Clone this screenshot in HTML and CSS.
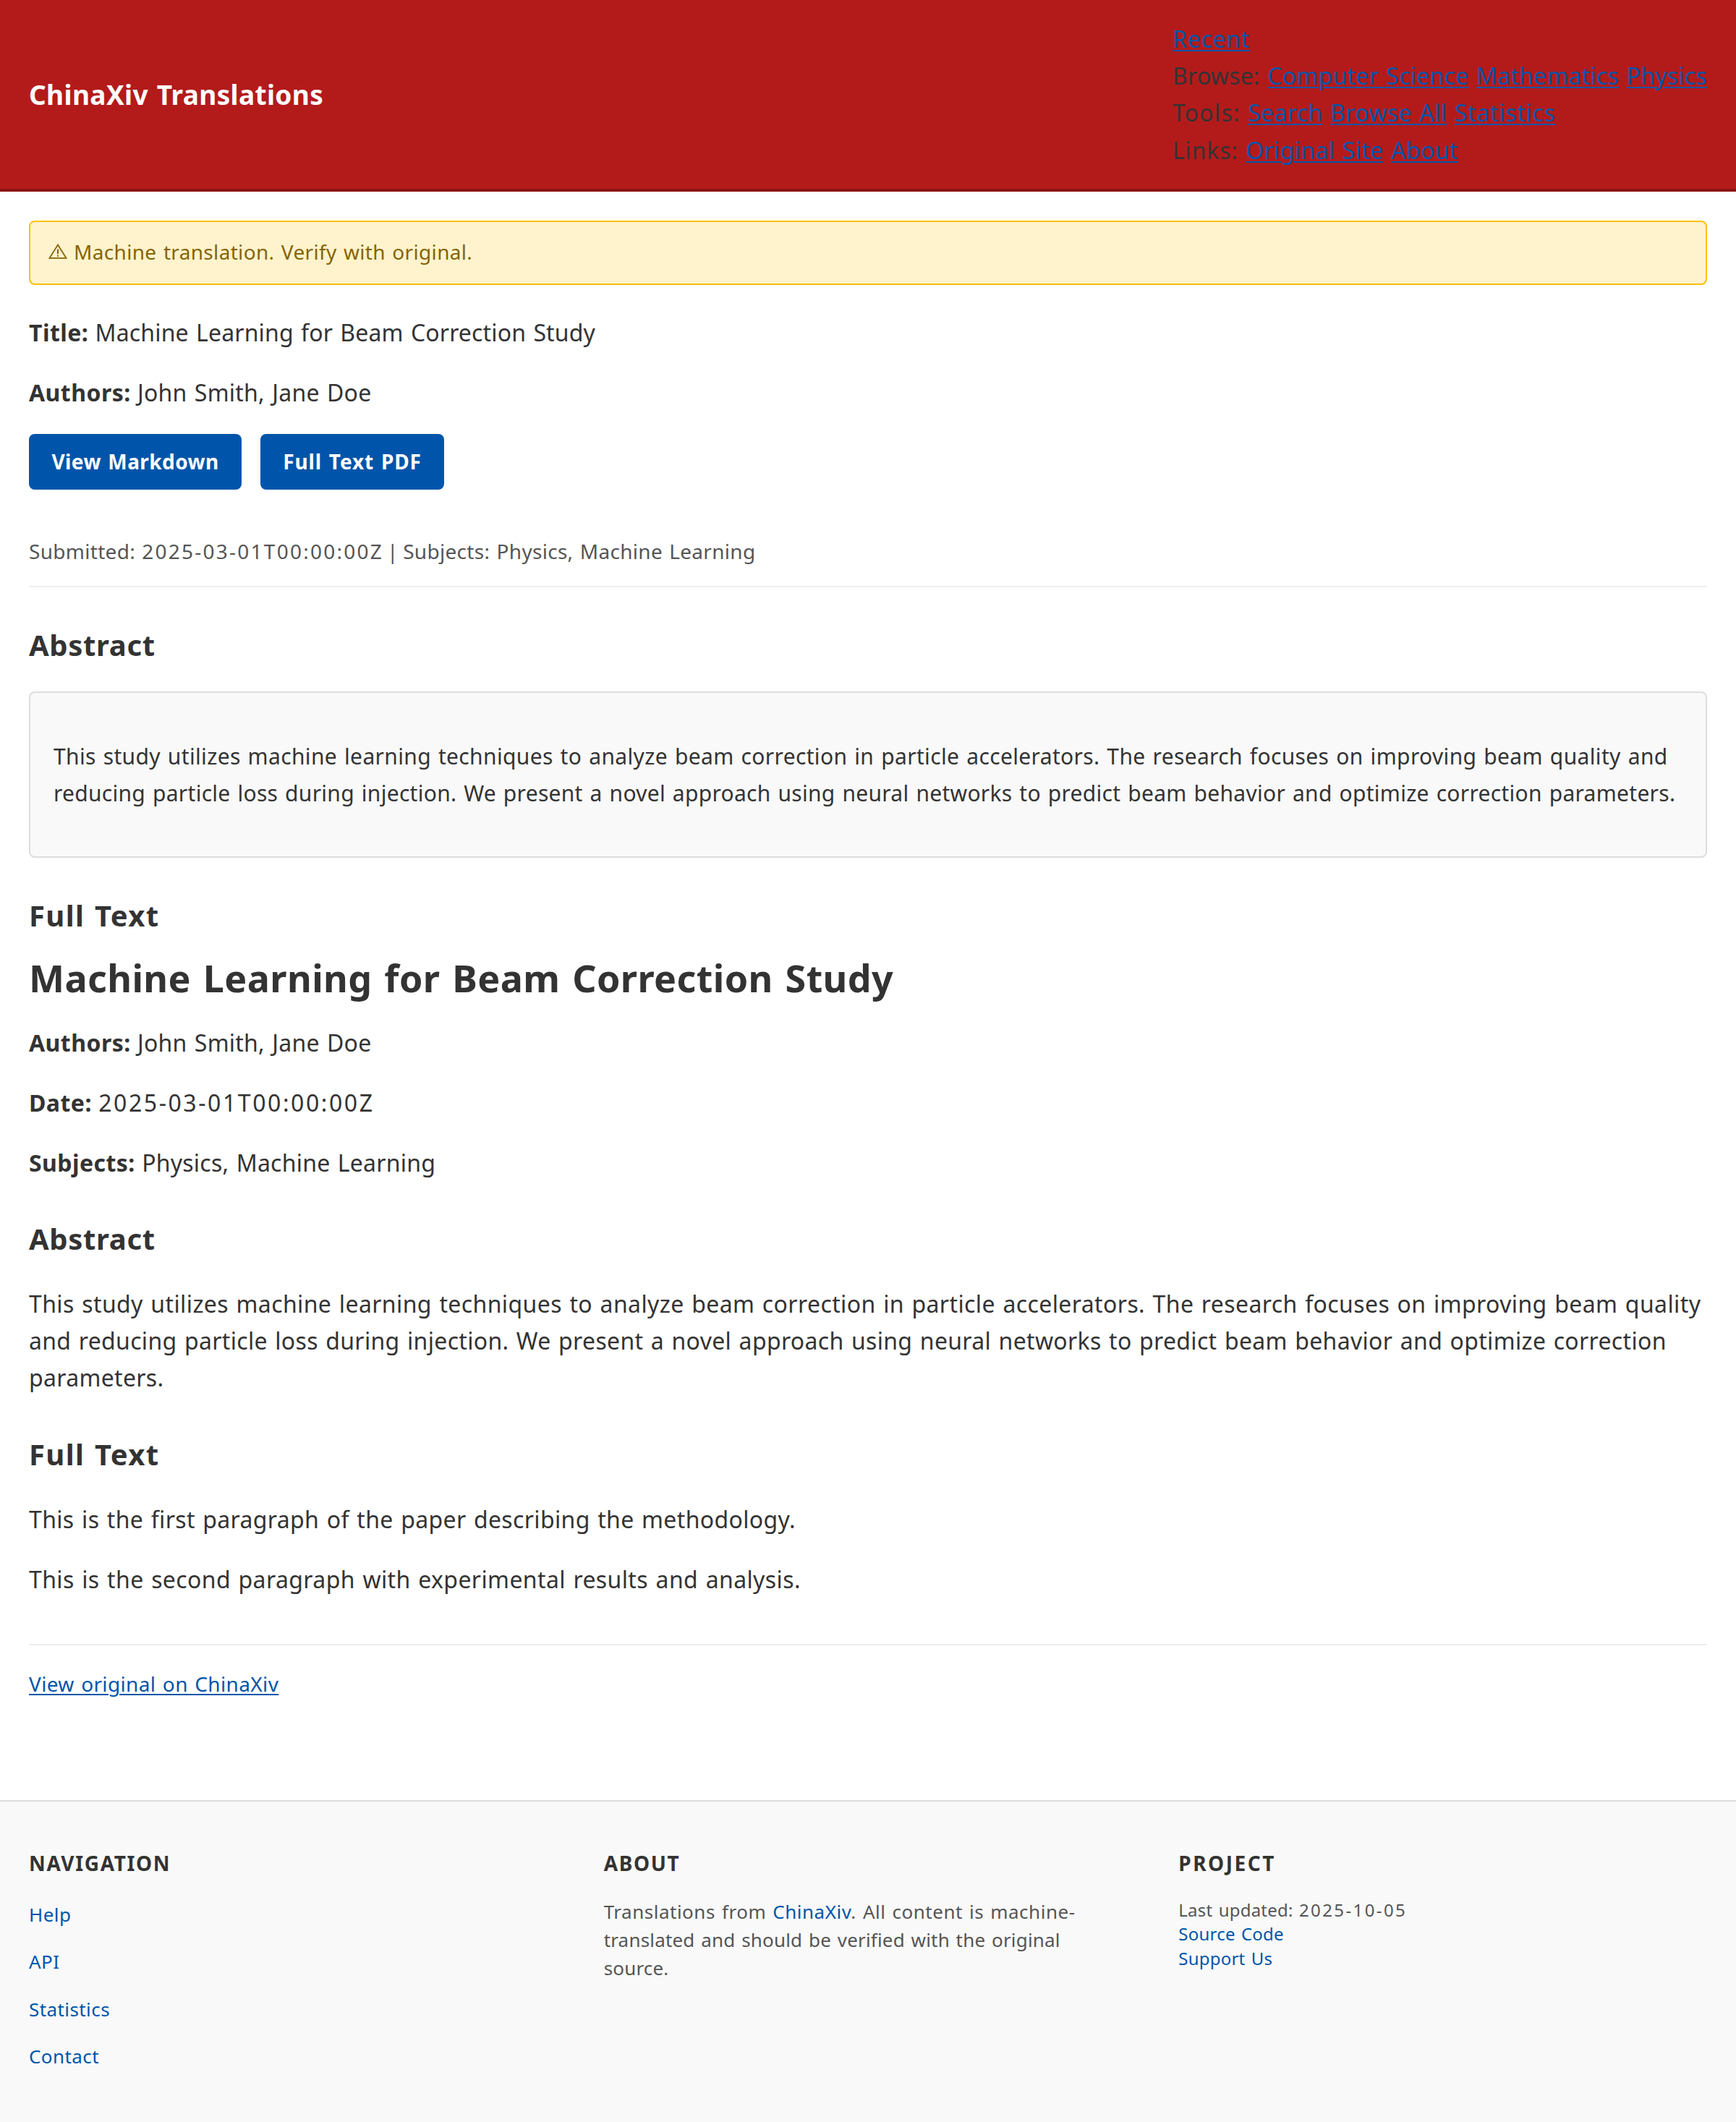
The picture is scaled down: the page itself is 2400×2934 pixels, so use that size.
FILE: index.html
```html
<!DOCTYPE html>
<html lang="en">
<head>
<meta charset="utf-8">
<title>Machine Learning for Beam Correction Study - ChinaXiv Translations</title>
<link rel="stylesheet" href="styles.css">
</head>
<body>
<header class="site-header">
  <div class="logo">ChinaXiv Translations</div>
  <nav class="site-nav">
    <div><a class="loose" href="#">Recent</a></div>
    <div class="browse">Browse: <a href="#">Computer Science</a> <a href="#">Mathematics</a> <a href="#">Physics</a></div>
    <div><span class="tools-label">Tools:</span> <a href="#">Search</a> <a href="#">Browse All</a> <a class="loose" href="#">Statistics</a></div>
    <div><span class="links-label">Links:</span> <a href="#">Original Site</a> <a href="#">About</a></div>
  </nav>
</header>
<main class="content">
  <div class="alert"><svg class="warn" viewBox="0 0 26 21" aria-hidden="true"><path d="M13 1.6 L24.6 19.9 H1.4 Z" fill="none" stroke="currentColor" stroke-width="1.8"/><path d="M13 7.5V14.2M13 15.8V17.8" stroke="currentColor" stroke-width="2"/></svg>Machine translation. Verify with original.</div>
  <p class="fact lead"><strong>Title:</strong> Machine Learning for Beam Correction Study</p>
  <p class="fact"><strong>Authors:</strong> John Smith, Jane Doe</p>
  <div class="actions">
    <a class="button" href="#">View Markdown</a>
    <a class="button button-pdf" href="#">Full Text PDF</a>
  </div>
  <div class="meta">Submitted: <span class="date">2025-03-01T00:00:00Z</span> <span class="sep">|</span> Subjects: Physics, Machine Learning</div>
  <h2>Abstract</h2>
  <div class="abstract"><p>This study utilizes machine learning techniques to analyze beam correction in particle accelerators. The research focuses on improving beam quality and reducing particle loss during injection. We present a novel approach using neural networks to predict beam behavior and optimize correction parameters.</p></div>
  <h2 class="wide before-title">Full Text</h2>
  <h1>Machine Learning for Beam Correction Study</h1>
  <p class="fact"><strong>Authors:</strong> John Smith, Jane Doe</p>
  <p class="fact"><strong>Date:</strong> <span class="date">2025-03-01T00:00:00Z</span></p>
  <p class="fact"><strong>Subjects:</strong> Physics, Machine Learning</p>
  <h2>Abstract</h2>
  <p class="body-text">This study utilizes machine learning techniques to analyze beam correction in particle accelerators. The research focuses on improving beam quality and reducing particle loss during injection. We present a novel approach using neural networks to predict beam behavior and optimize correction parameters.</p>
  <h2 class="wide">Full Text</h2>
  <p class="body-text short">This is the first paragraph of the paper describing the methodology.</p>
  <p class="body-text">This is the second paragraph with experimental results and analysis.</p>
  <div class="source"><a href="#">View original on ChinaXiv</a></div>
</main>
<footer class="site-footer">
  <section>
    <h3>Navigation</h3>
    <ul>
      <li><a href="#">Help</a></li>
      <li><a href="#">API</a></li>
      <li><a href="#">Statistics</a></li>
      <li><a href="#">Contact</a></li>
    </ul>
  </section>
  <section>
    <h3>About</h3>
    <p class="about">Translations from <a href="#">ChinaXiv</a>. All content is machine-<br>translated and should be verified with the original<br>source.</p>
  </section>
  <section>
    <h3 class="project-title">Project</h3>
    <div class="project">
      <div>Last updated: <span class="date">2025-10-05</span></div>
      <div><a href="#">Source Code</a></div>
      <div><a href="#">Support Us</a></div>
    </div>
  </section>
</footer>
</body>
</html>
```
FILE: styles.css
```css
* { box-sizing: border-box; }
body {
  margin: 0;
  background: #fff;
  color: #333;
  font-family: "Noto Sans", "Open Sans", sans-serif;
  font-size: 32px;
  line-height: 1.6;
  letter-spacing: .36px;
  word-spacing: 1.8px;
}
a { color: #0055aa; text-decoration-thickness: 2px; text-underline-offset: 3px; }
p { margin: 32px 0; }
strong { letter-spacing: .45px; margin-right: -1px; }
.date { letter-spacing: .08em; margin-right: -.08em; }

.site-header {
  display: flex;
  justify-content: space-between;
  align-items: center;
  padding: 28px 40px;
  background: #b31b1b;
  border-bottom: 4px solid #8b1414;
}
.logo { color: #fff; font-size: 37px; font-weight: 700; letter-spacing: .36px; }
.site-nav .loose { letter-spacing: .7px; }
.browse { letter-spacing: .24px; }
.tools-label { letter-spacing: 1.2px; }
.links-label { letter-spacing: .8px; }

.content { padding: 40px 40px 138px; }
.alert {
  display: flex;
  align-items: center;
  height: 89px;
  padding: 0 25px 1px;
  border: 2px solid #ffc107;
  border-radius: 8px;
  background: #fff3cd;
  color: #856404;
  font-size: 28px;
  letter-spacing: .33px;
}
.warn { width: 26px; height: 21px; margin: 0 9px 3px 0; }
.fact { letter-spacing: .23px; }
.lead { margin-top: 40px; letter-spacing: .15px; }

.actions { display: flex; gap: 26px; }
.button {
  padding: 16px 0;
  width: 294px;
  border-radius: 8px;
  background: #0055aa;
  color: #fff;
  font-size: 28px;
  font-weight: 700;
  letter-spacing: .42px;
  text-align: center;
  text-decoration: none;
}
.button-pdf { width: 254px; letter-spacing: .85px; }

.meta {
  margin-top: 63px;
  padding-bottom: 25px;
  border-bottom: 2px solid #eee;
  color: #555;
  font-size: 28px;
  letter-spacing: .29px;
}
.sep { margin: 0 -3px 0 -2px; }
h1 { margin: 0; font-size: 52px; line-height: 1.2; letter-spacing: .4px; word-spacing: 2.9px; }
h2 { margin: 56px 0 40px; font-size: 40px; line-height: 48px; letter-spacing: .66px; }
h2.wide { letter-spacing: 1.4px; }
h2.before-title { margin-bottom: 31.4px; }
.abstract {
  padding: 32px;
  border: 2px solid #ddd;
  border-radius: 8px;
  background: #f9f9f9;
  font-size: 30px;
  line-height: 1.7;
  letter-spacing: .285px;
}
.abstract p { margin: 30px 0; }
.abstract p::first-line { letter-spacing: .35px; }
.body-text { letter-spacing: .32px; }
.body-text::first-line { letter-spacing: .39px; }
.body-text.short::first-line { letter-spacing: .35px; }
.source { margin-top: 64px; padding-top: 31px; border-top: 2px solid #eee; font-size: 28px; }

.site-footer {
  display: grid;
  grid-template-columns: repeat(3, 1fr);
  gap: 64px;
  padding: 63px 40px 70px;
  border-top: 2px solid #ddd;
  background: #f9f9f9;
  color: #555;
}
.site-footer a { text-decoration: none; }
h3 {
  margin: 0 0 25px;
  color: #333;
  font-size: 28px;
  letter-spacing: 1.65px;
  text-transform: uppercase;
}
.project-title { letter-spacing: 2.5px; }
ul { margin: 28px 0 0; padding: 0; list-style: none; font-size: 26px; letter-spacing: .42px; }
li { margin-bottom: 24px; }
li:last-child { margin-bottom: 0; }
.about { margin: 0; font-size: 26px; line-height: 1.5; letter-spacing: .18px; }
.about::first-line { letter-spacing: .51px; }
.project { font-size: 24px; line-height: 1.4; letter-spacing: .22px; }
.project .date { letter-spacing: .1em; }
```
